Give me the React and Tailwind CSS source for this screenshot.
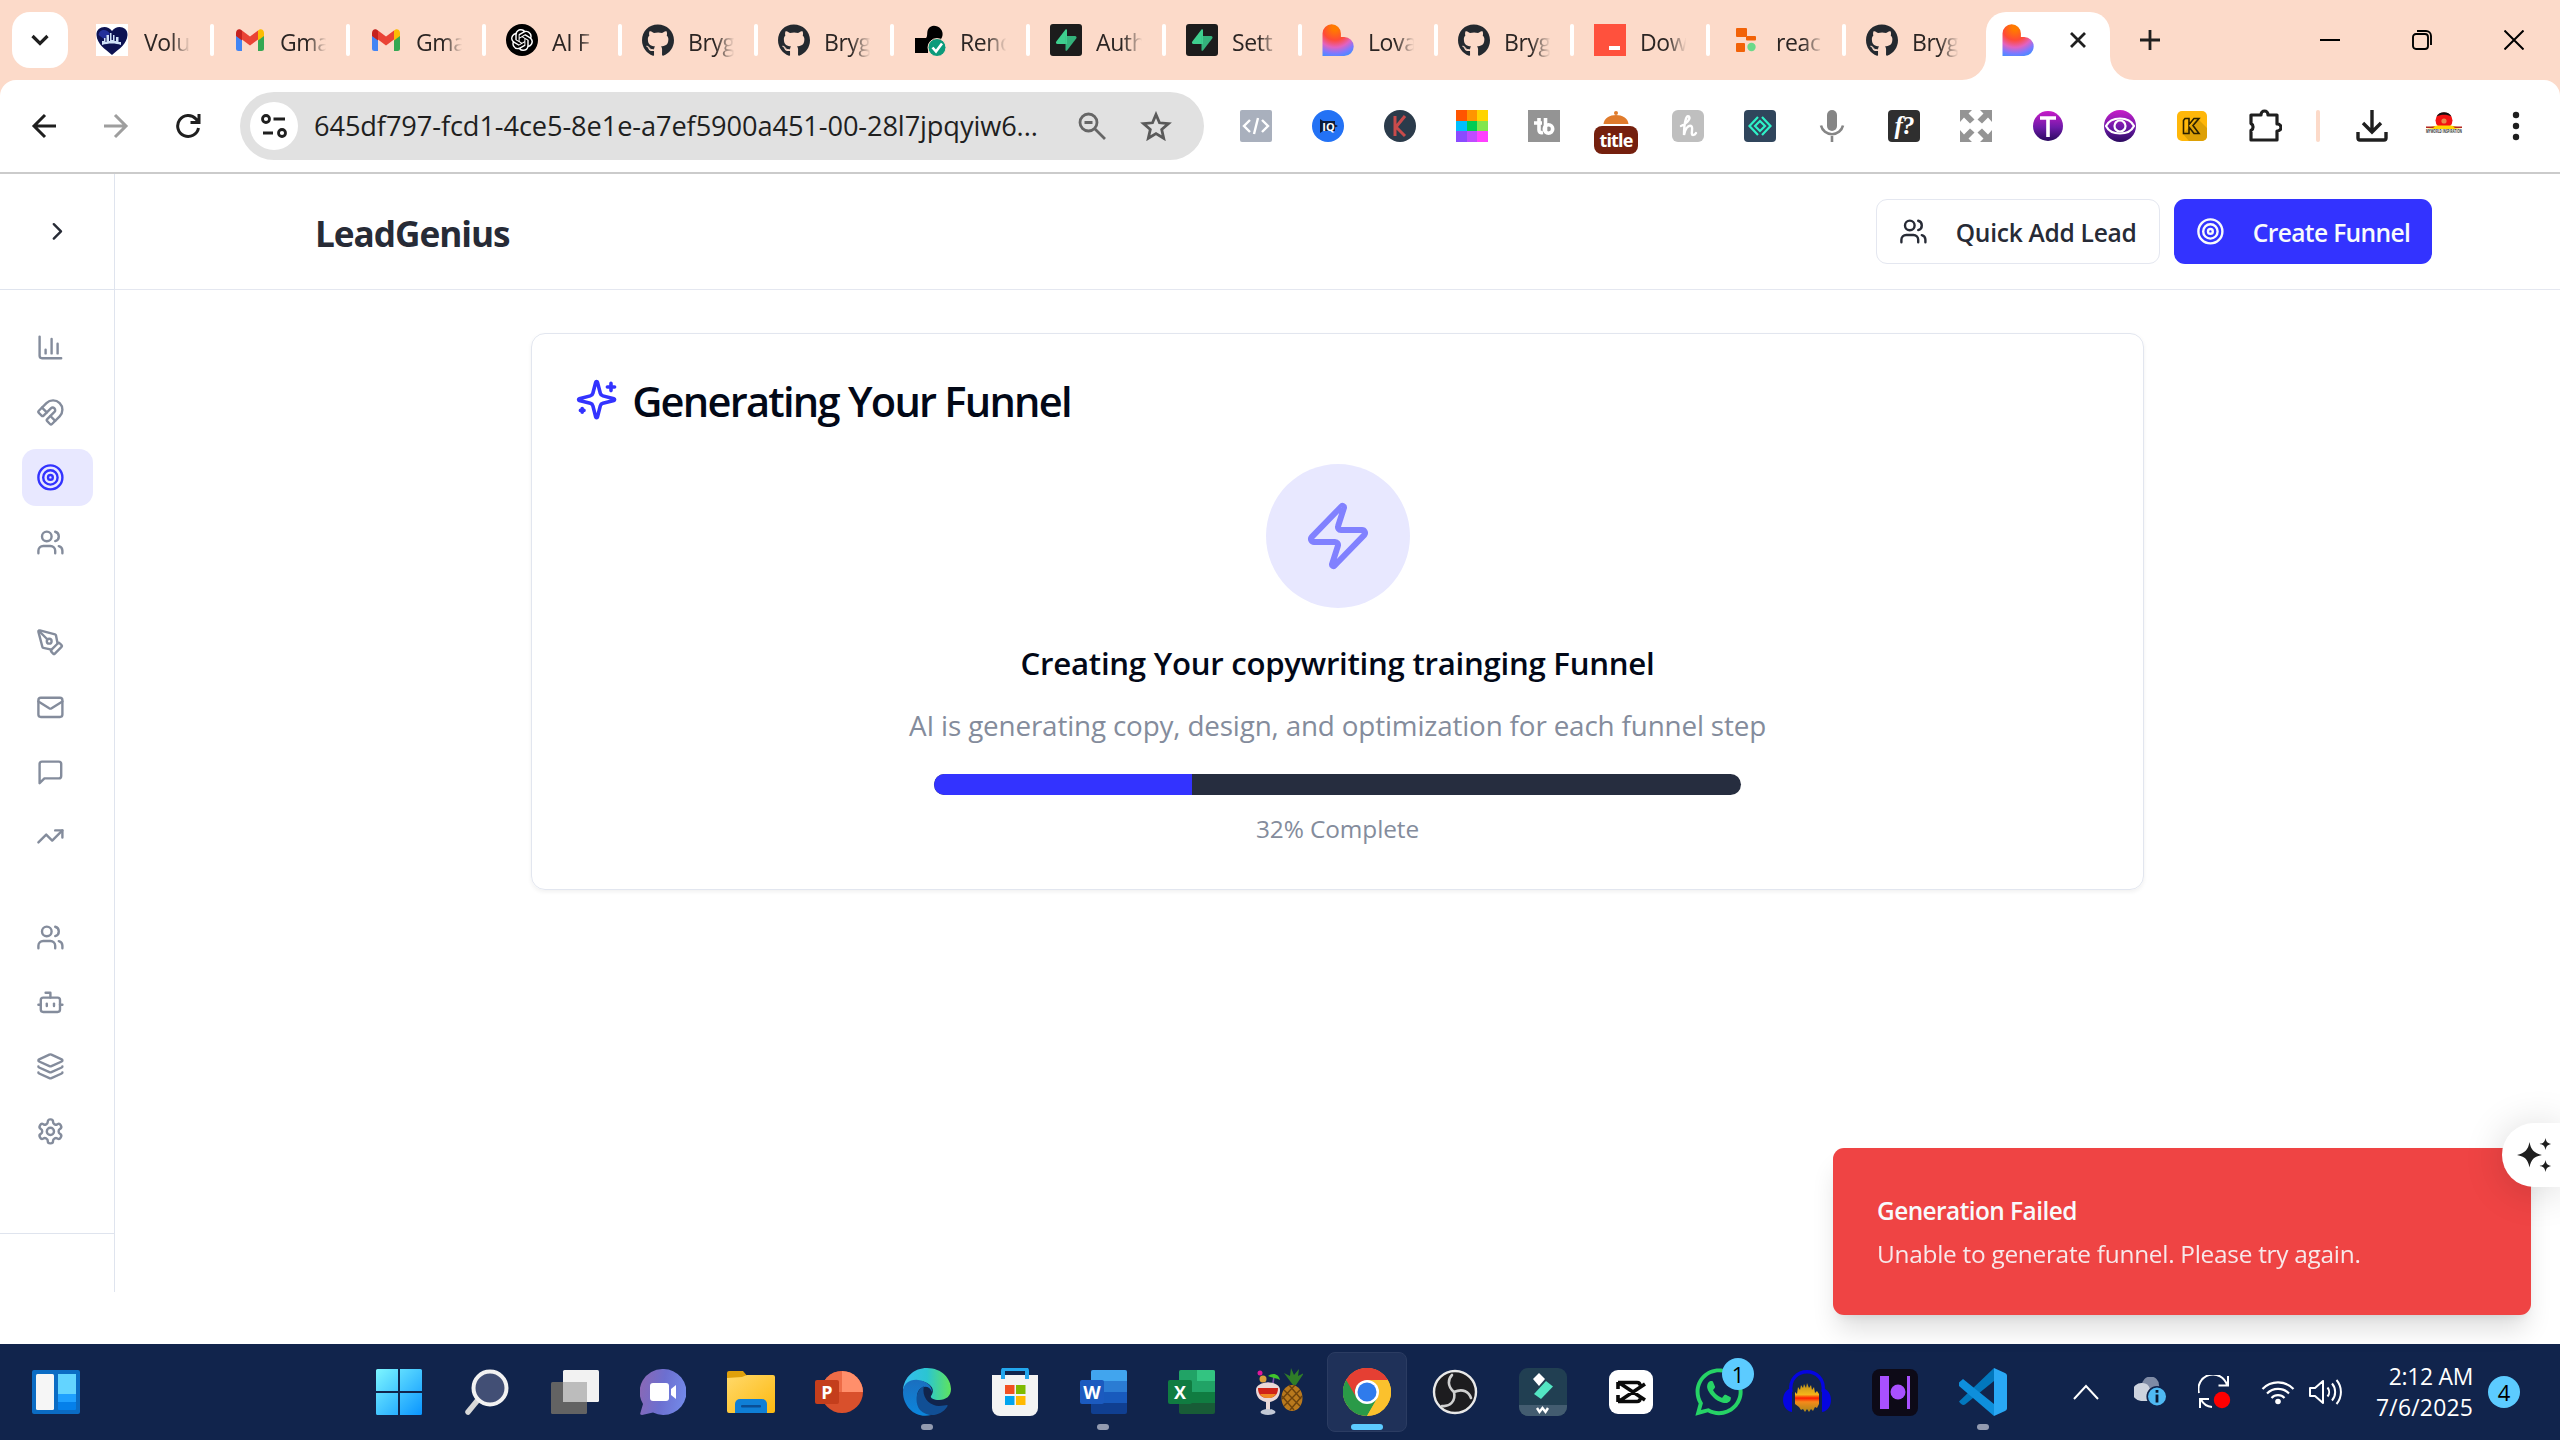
import React from "react";
import {
  ChevronRight, ChartColumn, Magnet, Target, Users, PenTool, Mail,
  TrendingUp, Bot, Layers, Zap,
} from "lucide-react";
import { SiOpenai } from "react-icons/si";
import { FaGithub, FaWhatsapp } from "react-icons/fa";

/* ---------- Tab favicons ---------- */

const Gmail = () => (
  <svg width="32" height="32" viewBox="0 0 32 32">
    <path d="M2 9v15.5A2.5 2.5 0 0 0 4.500 27H8V14.500z" fill="#4285f4" />
    <path d="M30 9v15.500A2.500 2.500 0 0 1 27.500 27H24V14.500z" fill="#34a853" />
    <path d="M8 6.500v9L16 21.500l8-6v-9l-8 6z" fill="#ea4335" />
    <path d="M2 9v3l6 4.500V6.500L6.500 5.600C4.500 4.500 2 6 2 9z" fill="#c5221f" />
    <path d="M30 9v3l-6 4.500V6.500l1.500-.9C27.500 4.500 30 6 30 9z" fill="#fbbc04" />
  </svg>
);

const Github = () => <FaGithub size={33} color="#24292f" />;

const OpenAi = () => (
  <div className="flex h-8 w-8 items-center justify-center rounded-full bg-black">
    <SiOpenai size={22} color="#fff" />
  </div>
);

const Volunteer = () => (
  <svg width="32" height="32" viewBox="0 0 32 32">
    <rect width="32" height="32" fill="#fff" />
    <path d="M16 31C9 25 1 20 .5 11 0 3 11 0 16 7 21 0 32 3 31.500 11 31 20 23 25 16 31z" fill="#0d1252" />
    <path d="M2.500 11C3 5 11 4 14 10L8 15z" fill="#23309a" />
    <path d="M6 21v-4h2v-3h1.500v4h1v-7H13v6h1V9h1.500v7h1.500v-5h1.500v6H20v-4h2.500v5H25v3c-5-2-13-2-19 0z" fill="#cfe0f7" />
  </svg>
);

const Render = () => (
  <svg width="32" height="32" viewBox="0 0 32 32">
    <path d="M1 29V14h11c2-2 .5-5 2-8.500C16 1.500 20 1 23.500 2.500 29 5 30 11 27 15c-3 4-8 3-13 8v6z" fill="#000" />
    <circle cx="23" cy="23.500" r="9" fill="#0c9b7b" stroke="#fcdac9" strokeWidth="1" />
    <path d="m18.500 23.500 3.500 4 6-8" fill="none" stroke="#fff" strokeWidth="2.600" />
  </svg>
);

const Supabase = () => (
  <svg width="32" height="32" viewBox="0 0 32 32">
    <rect width="32" height="32" rx="3" fill="#1c1c1c" />
    <path d="M17 6v14H7.500c-1.500 0-2-1.500-1.200-2.600L15.500 5.500C16 5 17 5.200 17 6z" fill="#3ecf8e" />
    <path d="M15.500 26V12H25c1.500 0 2 1.500 1.200 2.600L17 26.500c-.6.600-1.500.400-1.500-.5z" fill="#34b27b" />
    <path d="M17 12v8h-1.500v-8z" fill="#3ecf8e" />
  </svg>
);

const Lovable = () => (
  <svg width="32" height="32" viewBox="0 0 32 32">
    <defs>
      <radialGradient id="lov" cx="0.4" cy="0.1" r="0.95">
        <stop offset="0.1" stopColor="#ff7a00" />
        <stop offset="0.42" stopColor="#ff4a36" />
        <stop offset="0.66" stopColor="#e262c0" />
        <stop offset="0.86" stopColor="#7d78ff" />
        <stop offset="1" stopColor="#4b8bff" />
      </radialGradient>
    </defs>
    <path d="M.5 9.500a9.200 9.200 0 0 1 18.400 0V13h3.300a9.500 9.500 0 0 1 0 19H.5z" fill="url(#lov)" />
  </svg>
);

const Downloads = () => (
  <div className="flex h-8 w-8 items-end justify-end bg-[#ff513d] pr-[6px] pb-[6px]">
    <div className="h-1 w-[11px] bg-white" />
  </div>
);

const Replit = () => (
  <svg width="32" height="32" viewBox="0 0 32 32">
    <rect x="6" y="4" width="11" height="9" rx="1" fill="#f26207" />
    <rect x="16" y="12" width="10" height="4.500" rx="1" fill="#f26207" />
    <rect x="6" y="19" width="9" height="9" rx="1" fill="#f26207" />
    <circle cx="21.500" cy="23" r="4.200" fill="#6bd98a" />
  </svg>
);

const tabs = [
  [Volunteer, "Volu"], [Gmail, "Gma"], [Gmail, "Gma"], [OpenAi, "AI F"], [Github, "Bryg"],
  [Github, "Bryg"], [Render, "Rend"], [Supabase, "Auth"], [Supabase, "Sett"], [Lovable, "Lova"],
  [Github, "Bryg"], [Downloads, "Dow"], [Replit, "reac"], [Github, "Bryg"],
];

function TabStrip() {
  return (
    <div className="flex h-20 shrink-0 items-center bg-[#fcdac9] pl-3 text-[23px] text-[#2b2523]">
      <div className="flex h-14 w-14 items-center justify-center rounded-[18px] bg-white">
        <svg width="18" height="14" viewBox="0 0 18 14" fill="none" stroke="#1f1f1f" strokeWidth="3.200"><path d="m1.500 3 7.500 7.500L16.500 3" /></svg>
      </div>
      <div className="ml-[10px] flex">
        {tabs.map(([Icon, label], i) => (
          <div key={i} className={i === 0 ? "flex w-[136px] items-center pl-[18px]" : "flex w-[136px] items-center pl-5"}>
            <div className="flex h-8 w-8 shrink-0 items-center justify-center"><Icon /></div>
            <div className={i === 0 ? "ml-[16px] w-[48px] shrink-0" : "ml-[14px] w-[48px] shrink-0"}>
              <span className="block w-[54px] pt-1 leading-[32px] tracking-[-0.4px] whitespace-nowrap [mask-image:linear-gradient(to_right,black_50%,transparent_86%)]">{label}</span>
            </div>
            <div className={i < 13 ? "ml-[18px] h-8 w-1 shrink-0 rounded-full bg-white" : "hidden"} />
          </div>
        ))}
      </div>
      <div className="relative ml-1 flex h-[68px] w-[124px] items-center self-end rounded-t-[20px] bg-white pb-3 pl-4">
        <svg className="absolute bottom-0 left-[-24px]" width="24" height="24"><path d="M24 0v24H0A24 24 0 0 0 24 0z" fill="#fff" /></svg>
        <svg className="absolute right-[-24px] bottom-0" width="24" height="24"><path d="M0 0v24h24A24 24 0 0 1 0 0z" fill="#fff" /></svg>
        <Lovable />
        <svg className="ml-9" width="16" height="16" viewBox="0 0 16 16" stroke="#1f1f1f" strokeWidth="2.800"><path d="m1 1 14 14M15 1 1 15" /></svg>
      </div>
      <svg className="ml-[30px]" width="20" height="20" viewBox="0 0 20 20" stroke="#1f1f1f" strokeWidth="2.800"><path d="M10 0v20M0 10h20" /></svg>
      <div className="ml-auto flex items-center gap-[72px] pr-[36px]">
        <svg width="20" height="20" viewBox="0 0 20 20" stroke="#000" strokeWidth="2"><path d="M0 10h20" /></svg>
        <svg width="20" height="20" viewBox="0 0 20 20" fill="none" stroke="#000" strokeWidth="1.900"><rect x="1" y="4" width="15" height="15" rx="3" /><path d="M5 1h9a5 5 0 0 1 5 5v9" /></svg>
        <svg width="20" height="20" viewBox="0 0 20 20" stroke="#000" strokeWidth="2"><path d="m.5.5 19 19M19.500.5l-19 19" /></svg>
      </div>
    </div>
  );
}

/* ---------- Toolbar extensions ---------- */

const extensions = [
  <div className="flex h-8 w-8 items-center justify-center rounded-[2px] bg-[#a9b0bd]">
    <svg width="28" height="20" viewBox="0 0 28 20" fill="none" stroke="#fff" strokeWidth="2.400"><path d="m8 4-6 6 6 6M20 4l6 6-6 6M16 2l-4 16" /></svg>
  </div>,
  <svg width="32" height="32" viewBox="0 0 32 32"><circle cx="16" cy="16" r="16" fill="#2372f5" /><path d="M8 9 14 13v6l-6 4zM26 16l-6-3v6z" fill="#0b1c3c" /><rect x="10" y="11" width="13" height="10" fill="#0b1c3c" /><text x="16.500" y="20.500" fontSize="11" fontWeight="700" fill="#fff" textAnchor="middle">IQ</text></svg>,
  <svg width="32" height="32" viewBox="0 0 32 32"><circle cx="16" cy="16" r="16" fill="#2b3b4b" /><path d="M11 6v20M21 6l-9 11 9 9" fill="none" stroke="#c94b4b" strokeWidth="3" /></svg>,
  <div className="grid h-8 w-8 grid-cols-3 grid-rows-3">
    <i className="bg-[#ff5500]" /><i className="bg-[#ff9500]" /><i className="bg-[#ffd400]" />
    <i className="bg-[#00bfff]" /><i className="bg-[#00cc55]" /><i className="bg-[#80e64d]" />
    <i className="bg-[#8a4bff]" /><i className="bg-[#bf4bff]" /><i className="bg-[#ff40ff]" />
  </div>,
  <svg width="32" height="32" viewBox="0 0 32 32"><rect width="32" height="32" fill="#949494" /><g fill="none" stroke="#fff" strokeWidth="3.600"><path d="M11 8v12c0 2 1 3 4 2.500M6 13h8M17.500 8v13" /><circle cx="20.500" cy="19" r="4.200" /></g></svg>,
  <div className="relative h-8 w-8">
    <svg width="32" height="32" viewBox="0 0 32 32"><circle cx="16" cy="3" r="2" fill="#e07b2c" /><path d="M3.500 14C4 8 10 5 16 5s12 3 12.500 9z" fill="#e07b2c" /></svg>
    <div className="absolute top-4 left-[-6px] h-7 w-11 rounded-[8px] bg-[#75200e] text-center text-[18px] leading-[28px] font-bold tracking-[-0.8px] text-white">title</div>
  </div>,
  <div className="h-8 w-8 rounded-[6px] bg-[#bfbfbf]"><svg width="32" height="32" viewBox="0 0 32 32" fill="none" stroke="#fff" strokeWidth="2.400" strokeLinecap="round"><path d="M9 16C14 14 19 9 17 6.500 14 4 12 14 12 25c1-6 4-10 7-9 3 1-1 9 2 9 1.500 0 2.500-1 3-2" /></svg></div>,
  <svg width="32" height="32" viewBox="0 0 32 32"><rect width="32" height="32" rx="4" fill="#30455c" /><g fill="none" stroke="#2ef2c8" strokeWidth="2.200"><path d="m14 7-8.500 9 8.500 9M18 7l8.500 9-8.500 9" /><path d="m16 11 5 5-5 5-5-5z" /></g></svg>,
  <svg width="32" height="32" viewBox="0 0 32 32"><rect x="11" y="0" width="10" height="21" rx="5" fill="#858585" /><path d="M5 15.500a11.300 11.300 0 0 0 22 0M16 26v6" fill="none" stroke="#858585" strokeWidth="2.600" /></svg>,
  <div className="h-8 w-8 rounded-[4px] bg-[#2f2f2f] text-center font-['Liberation_Serif'] text-[25px] leading-[31px] font-bold tracking-[-1px] text-white italic">f?</div>,
  <svg width="32" height="32" viewBox="0 0 32 32" fill="#949494"><path d="M0 0h12L8.500 3.500l6 6-4.500 4-6-6L0 12z" /><path d="M32 0H20l3.500 3.500-6 6 4.500 4 6-6L32 12zM0 32h12l-3.500-3.500 6-6-4.500-4-6 6L0 20zM32 32H20l3.500-3.500-6-6 4.500-4 6 6L32 20z" /></svg>,
  <svg width="32" height="32" viewBox="0 0 32 32"><defs><linearGradient id="pu" x2="0" y2="1"><stop offset="0" stopColor="#c81cc8" /><stop offset="0.550" stopColor="#6d1aa8" /><stop offset="1" stopColor="#2a0a5e" /></linearGradient></defs><circle cx="16" cy="16" r="15" fill="url(#pu)" /><path d="M8 8h16M16 8v19" stroke="#fff" strokeWidth="3.600" /></svg>,
  <svg width="32" height="32" viewBox="0 0 32 32"><circle cx="16" cy="16" r="16" fill="url(#pu)" /><path d="M2 16C7 6 25 6 30 16 25 26 7 26 2 16z" fill="none" stroke="#fff" strokeWidth="2.200" /><circle cx="16" cy="16" r="5.500" fill="none" stroke="#fff" strokeWidth="2.200" /></svg>,
  <svg width="30" height="30" viewBox="0 0 30 30"><rect width="30" height="30" rx="5" fill="#ffb70a" /><path d="M20 7 30 17v8a5 5 0 0 1-5 5H12L6 23z" fill="#dda006" /><path d="M8 7.500h4v6l5-6h5l-6 7 6 8h-5l-5-6.500v6.500H6.500v-13z" fill="none" stroke="#2a2000" strokeWidth="1.600" /></svg>,
  <svg className="ml-[2px]" width="34" height="34" viewBox="0 0 34 34" fill="none" stroke="#1f1f1f" strokeWidth="3.200" strokeLinejoin="round"><path d="M3 6h10V5.500a3.500 3.500 0 0 1 7 0V6h9v9h.5a3.500 3.500 0 0 1 0 7H29v9H3v-9.500a4 4 0 0 0 0-7z" /></svg>,
];

function Toolbar() {
  return (
    <div className="shrink-0 bg-[#fcdac9]">
      <div className="flex h-[94px] items-center rounded-t-[16px] border-b-2 border-[#cbcbcb] bg-white pl-2">
        <div className="flex w-[72px] justify-center"><svg width="26" height="26" viewBox="0 0 26 26" fill="none" stroke="#1f1f1f" strokeWidth="3"><path d="M25 13H3M14 2 3 13l11 11" /></svg></div>
        <div className="flex w-[72px] justify-center"><svg width="26" height="26" viewBox="0 0 26 26" fill="none" stroke="#9e9e9e" strokeWidth="3"><path d="M1 13h22M12 2l11 11-11 11" /></svg></div>
        <div className="flex w-[72px] justify-center"><svg width="26" height="26" viewBox="0 0 26 26" fill="none" stroke="#1f1f1f" strokeWidth="3"><path d="M23.500 15A10.500 10.500 0 1 1 21 6l2 2.500M24 1v8.500h-8.500" /></svg></div>
        <div className="ml-4 flex h-[68px] w-[964px] items-center rounded-full bg-[#e1e1e1] pl-[10px]">
          <div className="flex h-12 w-12 items-center justify-center rounded-full bg-white">
            <svg width="26" height="24" viewBox="0 0 26 24" fill="none" stroke="#1f1f1f" strokeWidth="2.800"><circle cx="5" cy="5" r="3.500" /><path d="M12.500 5H24M2 19h10" /><circle cx="21" cy="19" r="3.500" /></svg>
          </div>
          <div className="ml-4 w-[731px] text-[27.2px] leading-[36px] tracking-[-0.1px] whitespace-nowrap text-[#1f1f1f]">645df797-fcd1-4ce5-8e1e-a7ef5900a451-00-28l7jpqyiw6...</div>
          <svg className="ml-[33px]" width="28" height="28" viewBox="0 0 28 28" fill="none" stroke="#666" strokeWidth="2.800"><circle cx="10.500" cy="10.500" r="8.500" /><path d="m16.500 16.500 10.500 10.500M6.500 10.500h8" /></svg>
          <svg className="ml-[34px]" width="32" height="30" viewBox="0 0 32 30" fill="none" stroke="#5a5a5a" strokeWidth="2.800"><path d="m16 3.500 3.500 8.300 9 .8-6.800 5.900 2 8.800-7.700-4.700-7.700 4.700 2-8.800-6.800-5.900 9-.8z" /></svg>
        </div>
        <div className="ml-4 flex">
          {extensions.map((icon, i) => (
            <div key={i} className="flex w-[72px] items-center justify-center">{icon}</div>
          ))}
        </div>
        <div className="flex w-9 justify-center"><div className="h-8 w-1 rounded-full bg-[#fcdac9]" /></div>
        <div className="flex w-[72px] justify-center"><svg width="32" height="32" viewBox="0 0 32 32" fill="none" stroke="#1f1f1f" strokeWidth="3.400"><path d="M16 0v22M7 13l9 9 9-9M2 22v6a2 2 0 0 0 2 2h24a2 2 0 0 0 2-2v-6" /></svg></div>
        <div className="flex w-[72px] justify-center">
          <svg width="38" height="32" viewBox="0 0 38 32"><ellipse cx="19" cy="10.500" rx="8.500" ry="8" fill="#f31212" /><path d="M11.500 6.500C14 .8 24 .8 26.500 6.500c-4-2.500-11-2.500-15 0z" fill="#111" /><circle cx="19" cy="11" r="2.600" fill="#e88a4a" /><path d="M1 18 12 15.500h14L37 18l-8 1H9z" fill="#ffd400" /><path d="M1 16.500h9L8 18H1zM28 16.500h9V18h-7z" fill="#b3261e" /><text x="1" y="22.500" fontSize="5" fontWeight="700" fill="#333" textLength="36" lengthAdjust="spacingAndGlyphs">MYWORLD INSPIRATION</text></svg>
        </div>
        <div className="flex w-[72px] justify-center"><svg width="8" height="30" fill="#1f1f1f"><circle cx="4" cy="4" r="3.200" /><circle cx="4" cy="15" r="3.200" /><circle cx="4" cy="26" r="3.200" /></svg></div>
      </div>
    </div>
  );
}

/* ---------- Web application ---------- */

const strokeProps = { fill: "none", stroke: "currentColor", strokeWidth: 2, strokeLinecap: "round", strokeLinejoin: "round" };

const Message = ({ size }) => (
  <svg width={size} height={size} viewBox="0 0 24 24" {...strokeProps}><path d="M21 15a2 2 0 0 1-2 2H7l-4 4V5a2 2 0 0 1 2-2h14a2 2 0 0 1 2 2z" /></svg>
);

const Gear = ({ size }) => (
  <svg width={size} height={size} viewBox="0 0 24 24" {...strokeProps}><path d="M12.220 2h-.44a2 2 0 0 0-2 2v.18a2 2 0 0 1-1 1.730l-.43.250a2 2 0 0 1-2 0l-.15-.080a2 2 0 0 0-2.730.730l-.22.380a2 2 0 0 0 .730 2.730l.150.100a2 2 0 0 1 1 1.720v.510a2 2 0 0 1-1 1.740l-.15.090a2 2 0 0 0-.730 2.730l.220.380a2 2 0 0 0 2.730.730l.150-.080a2 2 0 0 1 2 0l.430.250a2 2 0 0 1 1 1.730V20a2 2 0 0 0 2 2h.440a2 2 0 0 0 2-2v-.180a2 2 0 0 1 1-1.730l.430-.250a2 2 0 0 1 2 0l.150.080a2 2 0 0 0 2.730-.730l.220-.390a2 2 0 0 0-.730-2.730l-.150-.080a2 2 0 0 1-1-1.740v-.500a2 2 0 0 1 1-1.740l.150-.090a2 2 0 0 0 .730-2.730l-.220-.380a2 2 0 0 0-2.730-.730l-.150.080a2 2 0 0 1-2 0l-.430-.250a2 2 0 0 1-1-1.730V4a2 2 0 0 0-2-2z" /><circle cx="12" cy="12" r="3" /></svg>
);

const Sparkles = ({ size }) => (
  <svg width={size} height={size} viewBox="0 0 24 24" {...strokeProps}><path d="M9.937 15.500A2 2 0 0 0 8.500 14.063l-6.135-1.582a.5.5 0 0 1 0-.962L8.500 9.936A2 2 0 0 0 9.937 8.500l1.582-6.135a.5.5 0 0 1 .963 0L14.063 8.500A2 2 0 0 0 15.500 9.937l6.135 1.581a.5.5 0 0 1 0 .964L15.500 14.063a2 2 0 0 0-1.437 1.437l-1.582 6.135a.5.5 0 0 1-.963 0z" /><path d="M20 3v4M22 5h-4M4 17v2M5 18H3" /></svg>
);

const navGroups = [
  [ChartColumn, Magnet, Target, Users],
  [PenTool, Mail, Message, TrendingUp],
  [Users, Bot, Layers, Gear],
];

function Sidebar() {
  return (
    <aside className="flex h-[1118px] w-[115px] shrink-0 flex-col border-r border-[#dfe4ee]">
      <div className="flex h-[116px] shrink-0 items-center justify-center border-b border-[#dfe4ee] text-[#272b36]"><ChevronRight size={28.8} /></div>
      <nav className="flex flex-1 flex-col gap-[42.8px] pt-[29px] pl-[22px] text-[#848c9c]">
        {navGroups.map((group, g) => (
          <div key={g} className="flex flex-col gap-[7.2px]">
            {group.map((Icon, i) => (
              <div key={i} className={Icon === Target ? "flex h-[57.6px] w-[71px] items-center rounded-[14px] bg-[#e8e8ff] pl-[14px] text-[#3333ff]" : "flex h-[57.6px] w-[71px] items-center pl-[14px]"}><Icon size={28.8} /></div>
            ))}
          </div>
        ))}
      </nav>
      <div className="h-[59px] border-t border-[#dfe4ee]" />
    </aside>
  );
}

function Page() {
  return (
    <div className="relative flex min-h-0 flex-1 items-start bg-white">
      <Sidebar />
      <main className="min-w-0 flex-1">
        <header className="flex h-[116px] items-center border-b border-[#e4e7f0] pr-[128px] pl-[200px]">
          <h1 className="pt-[3px] text-[35.2px] leading-[48px] font-bold tracking-[-1.05px] text-[#272b36]">LeadGenius</h1>
          <div className="ml-auto flex gap-[14px] text-[24.6px] leading-[36px] font-semibold">
            <button className="flex h-[65px] w-[284px] items-center rounded-[11px] border border-[#e4e7f0] pl-[22px] tracking-[-0.3px] text-[#272b36]"><Users size={28.8} /><span className="ml-[28px] pt-[3px]">Quick Add Lead</span></button>
            <button className="flex h-[65px] w-[258px] items-center rounded-[11px] bg-[#3333ff] pl-[22px] tracking-[-0.65px] text-[#f8fafc]"><Target size={28.8} /><span className="ml-[28px] pt-[3px]">Create Funnel</span></button>
          </div>
        </header>
        <section className="mt-[43px] ml-[416px] flex h-[557px] w-[1613px] flex-col items-center rounded-[14px] border border-[#e2e6ef] pt-[44px] shadow-[0_2px_4px_rgba(0,0,0,0.06)]">
          <div className="flex h-[43px] items-center self-stretch pl-[43px] text-[#3333ff]">
            <Sparkles size={43.2} />
            <h2 className="ml-[14px] pt-[3px] text-[41.6px] leading-[43px] font-semibold tracking-[-1.75px] text-[#020817]">Generating Your Funnel</h2>
          </div>
          <div className="mt-[43px] flex h-36 w-36 shrink-0 items-center justify-center rounded-full bg-[#e8e8ff] text-[#8181ff]"><Zap size={72} /></div>
          <h3 className="mt-[33px] text-[31.2px] leading-[44px] font-semibold tracking-[-0.27px] text-[#020817]">Creating Your copywriting trainging Funnel</h3>
          <p className="mt-[18px] text-[27.8px] leading-[44px] tracking-[-0.15px] text-[#848c9c]">AI is generating copy, design, and optimization for each funnel step</p>
          <div className="mt-[27px] h-[21px] w-[807px] overflow-hidden rounded-full bg-[#262d3f]"><div className="h-full w-[32%] bg-[#3333ff]" /></div>
          <p className="mt-[16px] text-[24.4px] leading-[36px] tracking-[-0.1px] text-[#848c9c]">32% Complete</p>
        </section>
      </main>
      <div className="absolute right-[29px] bottom-[29px] h-[167px] w-[698px] rounded-[11px] bg-[#ef4444] pt-[45px] pl-[44px] text-[24.4px] leading-[36px] text-[#f8fafc] shadow-[0_18px_27px_-5px_rgba(0,0,0,0.14),0_7px_11px_-7px_rgba(0,0,0,0.1)]">
        <p className="font-semibold tracking-[-0.55px]">Generation Failed</p>
        <p className="mt-[7px] tracking-[-0.27px] opacity-90">Unable to generate funnel. Please try again.</p>
      </div>
      <div className="absolute right-0 bottom-[157px] flex h-16 w-[58px] items-center rounded-l-full bg-white pl-[15px] shadow-[0_4px_40px_rgba(0,0,0,0.16)]">
        <svg width="36" height="36" viewBox="0 0 36 36" fill="#1f1f1f"><path d="M12.500 5c1.500 8 4.500 11 12.500 13-8 1.500-11 4.500-12.500 12.500C11 22.500 8 19.500 0 18c8-2 11-5 12.500-13zM28.500 1c.8 4 2 5.300 6 6-4 .8-5.200 2-6 6-.8-4-2-5.200-6-6 4-.7 5.200-2 6-6zM28.500 23c.8 4 2 5.300 6 6-4 .8-5.200 2-6 6-.8-4-2-5.200-6-6 4-.7 5.200-2 6-6z" /></svg>
      </div>
    </div>
  );
}

/* ---------- Taskbar ---------- */

const OfficeTile = ({ letter, colors, tile }) => (
  <svg width="48" height="48" viewBox="0 0 48 48">
    <rect x="12" y="2" width="36" height="44" rx="2" fill={colors[3]} />
    <path d="M12 4a2 2 0 0 1 2-2h32a2 2 0 0 1 2 2v9H12z" fill={colors[0]} />
    <rect x="12" y="13" width="36" height="11" fill={colors[1]} />
    <rect x="12" y="24" width="36" height="11" fill={colors[2]} />
    {colors[4] && <path d="M30 2h16a2 2 0 0 1 2 2v9H30z" fill={colors[4]} />}
    {colors[4] && <path d="M30 13h18v11H30z" fill={colors[0]} />}
    <rect x="1" y="12" width="24" height="24" rx="2" fill={tile} />
    <text x="13" y="31" fontSize="18" fontWeight="700" fill="#fff" textAnchor="middle">{letter}</text>
  </svg>
);

const apps = [
  <svg width="46" height="46" viewBox="0 0 46 46"><defs><linearGradient id="win" x2="1" y2="1"><stop offset="0" stopColor="#7df6ff" /><stop offset="1" stopColor="#0a95ff" /></linearGradient></defs><path d="M1.500 0H22v22H0V1.500A1.500 1.500 0 0 1 1.500 0zM24 0h20.500A1.500 1.500 0 0 1 46 1.500V22H24zM0 24h22v22H1.500A1.500 1.500 0 0 1 0 44.500zM24 24h22v20.500a1.500 1.500 0 0 1-1.500 1.500H24z" fill="url(#win)" /></svg>,
  <svg width="44" height="46" viewBox="0 0 44 46"><path d="M12 32 3 43" stroke="#d8d8d8" strokeWidth="5.500" strokeLinecap="round" /><circle cx="25" cy="19" r="16.500" fill="#424f75" stroke="#f2f2f2" strokeWidth="4" /></svg>,
  <svg width="48" height="46" viewBox="0 0 48 46"><rect x="0" y="13" width="36" height="32" rx="1.500" fill="#636363" /><rect x="12" y="1" width="36" height="32" rx="1.500" fill="#f2f2f2" /><path d="M12 13h24v20H12z" fill="#bcbcbc" /></svg>,
  <svg width="46" height="46" viewBox="0 0 46 46"><defs><linearGradient id="chat" x1="0" y1="0.300" x2="1" y2="0.500"><stop offset="0" stopColor="#8a68b5" /><stop offset="0.500" stopColor="#6c6fd0" /><stop offset="1" stopColor="#7389e8" /></linearGradient></defs><path d="M23 0a23 23 0 1 1-10 43.500L2 46c-2 0-2-1-1.500-2.500L3 35A23 23 0 0 1 23 0z" fill="url(#chat)" /><rect x="10" y="14" width="19" height="18" rx="3" fill="#fff" /><path d="m31 20 5-4v14l-5-4z" fill="#fff" /></svg>,
  <svg width="48" height="46" viewBox="0 0 48 46"><defs><linearGradient id="fold" x2="1" y2="1"><stop offset="0" stopColor="#ffd96b" /><stop offset="1" stopColor="#fdb90f" /></linearGradient></defs><path d="M0 4a2 2 0 0 1 2-2h14l5 6-4 6H0z" fill="#dfa00b" /><path d="M0 9l15-1 5-2h26a2 2 0 0 1 2 2v34a2 2 0 0 1-2 2H2a2 2 0 0 1-2-2z" fill="url(#fold)" /><path d="M8 44V35a5 5 0 0 1 5-5h22a5 5 0 0 1 5 5v9z" fill="#0f7fd6" /><rect x="14" y="36" width="20" height="2.500" rx="1" fill="#0a4f96" /></svg>,
  <svg width="48" height="46" viewBox="0 0 48 46"><circle cx="27" cy="23" r="21" fill="#d9502c" /><path d="M27 2a21 21 0 0 1 21 21H27z" fill="#ff8f6b" /><path d="M27 2v21H6A21 21 0 0 1 27 2z" fill="#ed6c47" /><rect x="0" y="11" width="24" height="24" rx="2" fill="#c43e1c" /><text x="12" y="30" fontSize="18" fontWeight="700" fill="#fff" textAnchor="middle">P</text></svg>,
  <svg width="48" height="48" viewBox="0 0 48 48"><defs><linearGradient id="e1"><stop offset="0" stopColor="#36bdf0" /><stop offset="0.500" stopColor="#2bc5d2" /><stop offset="1" stopColor="#5fe35c" /></linearGradient><linearGradient id="e2" x2="0" y2="1"><stop offset="0" stopColor="#1b6fbf" /><stop offset="1" stopColor="#0b86dd" /></linearGradient></defs><path d="M0 22C1 9 11 0 24 0c15 0 24 11 24 21 0 7-5 11-12 11-5 0-9-2-8-4 3-4 3-9-4-13C16 11 5 12 0 22z" fill="url(#e1)" /><path d="M0 24c0-9 8-13 15-12 9 1 14 6 14 12-2-6-9-7-13-2-5 7 0 20 12 25C14 51 0 40 0 24z" fill="url(#e2)" /><path d="M21 18c-3 12 6 20 15 20 4 0 6-1 8-1 1 0 .5 1 0 2-6 9-19 11-27 3-6-8-4-20 4-24z" fill="#114f95" /></svg>,
  <svg width="46" height="48" viewBox="0 0 46 48"><path d="M11 12V3a2 2 0 0 1 2-2h20a2 2 0 0 1 2 2v9" fill="none" stroke="#22a7ee" strokeWidth="4" /><path d="M0 7h46v33a8 8 0 0 1-8 8H8a8 8 0 0 1-8-8z" fill="#f3f3f3" /><path d="M9 7h4v4H9zM33 7h4v4h-4z" fill="#22a7ee" /><path fill="#f25022" d="M13 17h9.500v9H13z" /><path fill="#7fba00" d="M24 17h9.500v9H24z" /><path fill="#00a4ef" d="M13 28h9.500v9H13z" /><path fill="#ffb900" d="M24 28h9.500v9H24z" /></svg>,
  <OfficeTile letter="W" tile="#1b5abf" colors={["#41a5ee", "#2b7cd3", "#185abd", "#103f91"]} />,
  <OfficeTile letter="X" tile="#107c41" colors={["#21a366", "#21a366", "#107c41", "#185c37", "#33c481"]} />,
  <svg width="48" height="48" viewBox="0 0 48 48"><path d="M38 17 29 5l6 3 1-8 3 7 5-6-1 7 6-3-8 12z" fill="#2f7d28" /><ellipse cx="37" cy="30" rx="10.500" ry="13" fill="#b9791d" /><path d="m29 22 16 16M27 28l12 14M34 17l12 14M45 22 29 38M47 28 35 42M40 17 27 31" stroke="#6e430c" strokeWidth="1.400" /><path d="M13 14v10M19 8l-2 14" stroke="#7d52a8" strokeWidth="1.600" /><path d="M13 8c5-4 11-2 12 4-4-2-8-2-12-4z" fill="#3fc42c" /><circle cx="5" cy="5" r="2.500" fill="#e0189a" /><circle cx="8" cy="11" r="3.500" fill="#d9a03c" /><path d="M1 22c0-10 24-10 24 0 0 8-5 11-10 12v8h-4v-8C6 33 1 30 1 22z" fill="#e9d8d8" /><path d="M3 20h20c0 7-4 10-10 10S3 27 3 20z" fill="#d02318" /><path d="M5 26h16c-2 3-4 4-8 4s-6-1-8-4z" fill="#f08a24" /><ellipse cx="13" cy="44" rx="7.500" ry="3" fill="#c3c9d6" /></svg>,
  <svg width="48" height="48" viewBox="0 0 48 48"><circle cx="24" cy="24" r="24" fill="#fbc12d" /><path d="M24 24 3.200 12A24 24 0 0 1 44.800 12z" fill="#e53f33" /><path d="M3.200 12A24 24 0 0 0 24 48l10.400-18L24 24z" fill="#2a9a48" /><path d="M24 12h20.800A24 24 0 0 1 24 48l10.400-18z" fill="#fbc12d" /><path d="M3.200 12a24 24 0 0 1 41.600 0H24A12 12 0 0 0 13.600 30z" fill="#e53f33" /><circle cx="24" cy="24" r="12" fill="#fff" /><circle cx="24" cy="24" r="9.500" fill="#2f7bec" /></svg>,
  <svg width="46" height="46" viewBox="0 0 46 46"><circle cx="23" cy="23" r="21" fill="#1d1c1f" stroke="#e8e8e8" strokeWidth="2.400" /><g fill="none" stroke="#cfcfcf" strokeWidth="2.600" strokeLinecap="round"><path d="M22 23C15 17 16 10 20 6" /><path d="M22 23c9-4 15 0 17 6M22 23c2 9-4 15-12 14" /></g></svg>,
  <svg width="48" height="48" viewBox="0 0 48 48"><rect width="48" height="48" rx="9" fill="#213f52" /><path d="M0 37h48v2a9 9 0 0 1-9 9H9a9 9 0 0 1-9-9z" fill="#435c70" /><path d="m20 5 6 6-6 7-6-7z" fill="#fff" /><path d="m27 13 7 5.500L22 31l-7-5z" fill="#53e6c3" /><path d="m18 40 2.500 4 3-4 3 4 2.500-4" fill="none" stroke="#fff" strokeWidth="2.400" /></svg>,
  <svg width="44" height="44" viewBox="0 0 44 44"><rect width="44" height="44" rx="9" fill="#fff" /><path d="M36 14 12 30H9v-5M36 30 12 14H9v5M9 12.500h19c2 0 3 1 3 3M9 31.500h19c2 0 3-1 3-3M9 12v7M9 25v7" fill="none" stroke="#0a0a0a" strokeWidth="3.600" /></svg>,
  <div className="relative">
    <FaWhatsapp size={54} color="#26d366" />
    <div className="absolute top-[-7px] right-[-8px] h-8 w-8 rounded-full bg-[#5ccbff] text-center text-[22px] leading-[32px] text-black">1</div>
  </div>,
  <svg width="48" height="44" viewBox="0 0 48 44"><defs><linearGradient id="aud" x2="0" y2="1"><stop offset="0" stopColor="#b9901a" /><stop offset="0.400" stopColor="#f5b51a" /><stop offset="0.520" stopColor="#ff1a00" /><stop offset="0.650" stopColor="#f58a1a" /><stop offset="1" stopColor="#a8881a" /></linearGradient></defs><path d="M8 22C4 -5 44 -5 40 22" fill="none" stroke="#0505e0" strokeWidth="3.400" /><path d="M12 34V22l2 2 1-7 2 3 1-5 2 3 1-4 2 4 1-5 2 5 2-3 1 5 2-3 1 6 2-2 2 3v10l-2 4-2-1-2 4-2-2-2 3-2-3-2 3-2-3-2 1-2-3z" fill="url(#aud)" /><path d="M9 18v24C-3 40-3 20 9 18zM39 18v24c12-2 12-22 0-24z" fill="#0505e0" /></svg>,
  <svg width="46" height="47" viewBox="0 0 46 47"><rect width="46" height="47" rx="8" fill="#0d0a17" /><path d="M8 7h9v33H8zM35 7h3v33h-3z" fill="#a850ff" /><circle cx="26" cy="23" r="7.500" fill="#a850ff" /></svg>,
  <svg width="48" height="48" viewBox="0 0 48 48"><path d="M0 33.500 35 0v13L6 36.500c-2 1-4 0-6-3z" fill="#0277bd" /><path d="M0 14.500l4-3.500 31 25v12L0 18c-1-1-1-2.500 0-3.500z" fill="#0e8fdc" /><path d="M35 0 46 5a3 3 0 0 1 2 3v32a3 3 0 0 1-2 3L35 48z" fill="#29a8f5" /></svg>,
];

const running = { 6: true, 8: true, 18: true };

function Taskbar() {
  return (
    <div className="flex h-24 shrink-0 items-center bg-[#11244c] pl-8 text-white">
      <svg width="48" height="44" viewBox="0 0 48 44"><rect width="48" height="44" rx="2" fill="#0b6cc4" /><rect x="4" y="4" width="18" height="36" rx="1.500" fill="#f6f6f6" /><rect x="26" y="4" width="18" height="20" fill="#63d4ff" /><rect x="26" y="24" width="18" height="8" fill="#1fa0ff" /><rect x="26" y="32" width="18" height="8" rx="1" fill="#0580ea" /></svg>
      <div className="ml-[275px] flex">
        {apps.map((icon, i) => (
          <div key={i} className="flex h-24 w-[88px] items-center justify-center">
            <div className={i === 11 ? "relative flex h-20 w-20 items-center justify-center rounded-[8px] border border-[#2b3c62] bg-[#1f3159]" : "relative flex h-20 w-20 items-center justify-center"}>
              {icon}
              {i === 11 && <div className="absolute bottom-[1px] h-[6px] w-8 rounded-full bg-[#5ccbff]" />}
              {running[i] && <div className="absolute bottom-[2px] h-[6px] w-3 rounded-full bg-[#939bb0]" />}
            </div>
          </div>
        ))}
      </div>
      <div className="ml-[46px] flex items-center">
        <svg width="26" height="16" viewBox="0 0 26 16" fill="none" stroke="#fff" strokeWidth="2"><path d="M1 15 13 2l12 13" /></svg>
        <svg className="ml-[35px]" width="32" height="30" viewBox="0 0 32 30"><path d="M8 8a8.500 8.500 0 0 1 17 0l1 6H14z" fill="#7f8ba5" /><path d="M8 6a8 8 0 0 1 8 6l3 8-2 4H7A8.500 8.500 0 0 1 8 6z" fill="#cdd3de" /><circle cx="23" cy="19.500" r="9.800" fill="#4fb9f2" stroke="#11244c" strokeWidth="1.600" /><path d="M23 17.500v8M23 13v2.800" stroke="#0b1830" strokeWidth="2.800" /></svg>
        <svg className="ml-[32px]" width="34" height="34" viewBox="0 0 34 34" fill="none" stroke="#fff" strokeWidth="2"><path d="M1 18A14.500 14.500 0 0 1 29 10M30 1v9.500h-9.500M2 33v-9h9M3 24.500c2 4 6 7 11 7.500" /><circle cx="24" cy="25" r="8.200" fill="#ff0000" stroke="none" /></svg>
        <svg className="ml-[29px]" width="34" height="26" viewBox="0 0 34 26" fill="none" stroke="#fff" strokeWidth="2.200"><path d="M1.500 10a21.500 21.500 0 0 1 31 0M6 14.500a15.500 15.500 0 0 1 22 0M10.500 19a9 9 0 0 1 13 0" /><circle cx="17" cy="22.500" r="2.800" fill="#fff" stroke="none" /></svg>
        <svg className="ml-[14px]" width="34" height="28" viewBox="0 0 34 28" fill="none" stroke="#fff" strokeWidth="2"><path d="M1 10h5l8-7v22l-8-7H1zM18.500 9.500a7 7 0 0 1 0 9M23 5.500a13 13 0 0 1 0 17M27.500 2a18.500 18.500 0 0 1 0 24" strokeLinejoin="round" /></svg>
      </div>
      <div className="mr-[15px] ml-auto text-right text-[22.9px] leading-[31px]">
        <p className="tracking-[-0.3px]">2:12 AM</p>
        <p className="tracking-[0.2px]">7/6/2025</p>
      </div>
      <div className="mr-10 h-8 w-8 rounded-full bg-[#5ccbff] text-center text-[22px] leading-[32px] text-black">4</div>
    </div>
  );
}

export default function App() {
  return (
    <div className="flex h-[1440px] w-[2560px] flex-col overflow-hidden bg-white font-['Open_Sans','Noto_Sans',sans-serif]">
      <TabStrip />
      <Toolbar />
      <Page />
      <Taskbar />
    </div>
  );
}
